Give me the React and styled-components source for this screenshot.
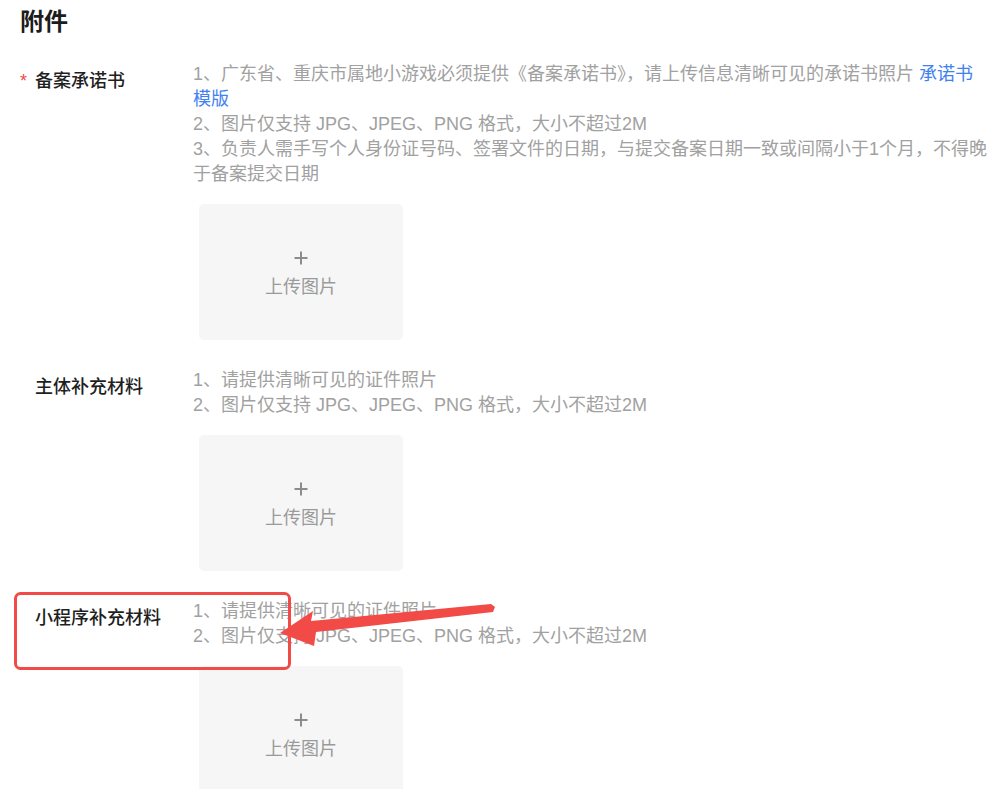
import React from 'react';
import styled, { createGlobalStyle } from 'styled-components';

const GlobalStyle = createGlobalStyle`
  body {
    margin: 0;
    background: #ffffff;
    font-family: "Liberation Sans", "Noto Sans CJK SC", sans-serif;
  }
`;

const sections = [
  {
    label: '备案承诺书',
    required: true,
    lines: [
      {
        text: '1、广东省、重庆市属地小游戏必须提供《备案承诺书》，请上传信息清晰可见的承诺书照片',
        link: '承诺书模版',
      },
      { text: '2、图片仅支持 JPG、JPEG、PNG 格式，大小不超过2M' },
      { text: '3、负责人需手写个人身份证号码、签署文件的日期，与提交备案日期一致或间隔小于1个月，不得晚于备案提交日期' },
    ],
  },
  {
    label: '主体补充材料',
    lines: [
      { text: '1、请提供清晰可见的证件照片' },
      { text: '2、图片仅支持 JPG、JPEG、PNG 格式，大小不超过2M' },
    ],
  },
  {
    label: '小程序补充材料',
    lines: [
      { text: '1、请提供清晰可见的证件照片' },
      { text: '2、图片仅支持 JPG、JPEG、PNG 格式，大小不超过2M' },
    ],
  },
];

const App = () => {
  return (
    <>
      <GlobalStyle />
      <Page>
        <Title>附件</Title>
        <Sections>
          {sections.map((s) => (
            <Row key={s.label}>
              <Label>
                {s.required && <Star>*</Star>}
                {s.label}
              </Label>
              <Body>
                <Desc>
                  {s.lines.map((l, i) => (
                    <p key={i}>
                      {l.text}
                      {l.link && (
                        <>
                          {' '}
                          <DocLink href="#">{l.link}</DocLink>
                        </>
                      )}
                    </p>
                  ))}
                </Desc>
                <Upload type="button">
                  <svg width="16" height="16" viewBox="0 0 16 16">
                    <path d="M8 1.5v13M1.5 8h13" stroke="#8c8c8c" strokeWidth="2" fill="none" />
                  </svg>
                  <span>上传图片</span>
                </Upload>
              </Body>
            </Row>
          ))}
        </Sections>

        {/* annotation drawn over the screenshot */}
        <Annotation width="997" height="789" viewBox="0 0 997 789">
          <rect x="15.5" y="593.5" width="274" height="75" rx="5" fill="none" stroke="#f24b47" strokeWidth="3" />
          <polygon
            points="280,633 313,611 311,621 491,604 495,607 493,612 316,632 314,646"
            fill="#f24b47"
          />
        </Annotation>
      </Page>
    </>
  );
};

export default App;

const Page = styled.div`
  position: relative;
  padding: 5px 0 0 20px;
  height: 789px;
  box-sizing: border-box;
  overflow: hidden;
`;

const Title = styled.h1`
  margin: 0 0 23px;
  font-size: 24px;
  line-height: 34px;
  font-weight: 700;
  color: #1c1c1c;
`;

const Sections = styled.div`
  display: flex;
  flex-direction: column;
  gap: 28px;
`;

const Row = styled.div`
  display: grid;
  grid-template-columns: 173px 795px;
`;

const Label = styled.div`
  padding: 7px 0 0 15px;
  font-size: 18px;
  line-height: 25px;
  font-weight: 500;
  color: #1f1f1f;
`;

const Star = styled.span`
  display: inline-block;
  width: 15px;
  margin-left: -15px;
  color: #f04b4b;
`;

const Body = styled.div`
  display: flex;
  flex-direction: column;
  align-items: flex-start;
  gap: 17px;
`;

const Desc = styled.div`
  font-size: 18px;
  line-height: 25px;
  color: #a1a1a1;

  p {
    margin: 0;
  }
`;

const DocLink = styled.a`
  color: #3f82f0;
  text-decoration: none;
`;

const Upload = styled.button`
  margin-left: 6px;
  width: 204px;
  height: 136px;
  border: none;
  border-radius: 5px;
  background: #f6f6f7;
  display: flex;
  flex-direction: column;
  align-items: center;
  justify-content: center;
  gap: 9px;
  padding: 6px 0 0;
  font-family: inherit;
  font-size: 18px;
  line-height: 25px;
  color: #9a9a9a;
  cursor: pointer;
`;

const Annotation = styled.svg`
  position: absolute;
  left: 0;
  top: 0;
  pointer-events: none;
`;
